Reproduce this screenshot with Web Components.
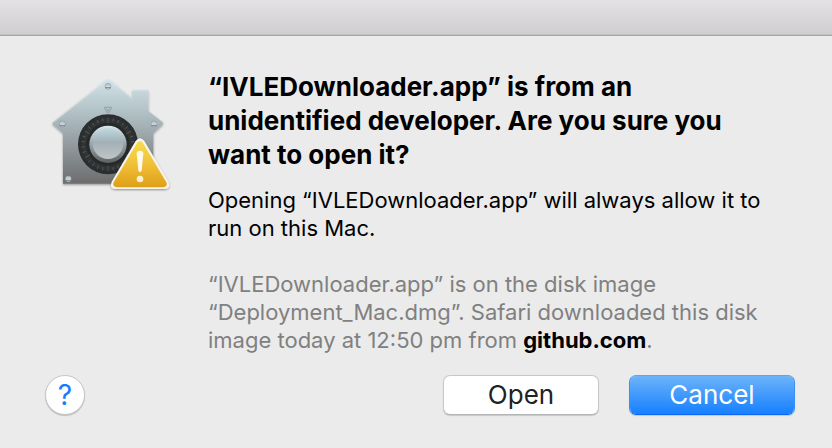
<!DOCTYPE html>
<html lang="en">
<head>
<meta charset="utf-8">
<title>Open application</title>
<style>
body { margin: 0; background: #ebebeb; font-family: Inter, "Liberation Sans", sans-serif; color: #000; }
</style>
</head>
<body>
<alert-dialog>
  <gatekeeper-icon slot="icon"></gatekeeper-icon>
  <alert-message slot="message">
    <span slot="title">“IVLEDownloader.app” is from an unidentified developer. Are you sure you want to open it?</span>
    <span slot="body">Opening “IVLEDownloader.app” will always allow it to run on this Mac.</span>
    <span slot="info">“IVLEDownloader.app” is on the disk image “Deployment_Mac.dmg”. Safari downloaded this disk image today at 12:50 pm from <b style="color:#000">github.com</b>.</span>
  </alert-message>
  <help-button slot="help"></help-button>
  <push-button slot="actions">Open</push-button>
  <push-button slot="actions" primary>Cancel</push-button>
</alert-dialog>
<script>
const define = (name, html) => {
  const template = document.createElement('template');
  template.innerHTML = html;
  customElements.define(name, class extends HTMLElement {
    constructor() {
      super();
      this.attachShadow({ mode: 'open' }).append(template.content.cloneNode(true));
    }
  });
};

define('alert-dialog', `
<style>
:host { display: flex; flex-direction: column; min-height: 100vh; box-sizing: border-box; background: #ebebeb; }
header { height: 35px; background: linear-gradient(#e4e2e5, #cfcdd0); border-bottom: 1px solid #a6a4a7; box-shadow: inset 0 -1px #c3c1c4; }
main { display: grid; grid-template-columns: auto 1fr; column-gap: 28px; padding: 34px 60px 0 40px; }
footer { display: flex; align-items: center; justify-content: space-between; padding: 21px 37px 33px 45px; }
.actions { display: flex; gap: 30px; }
</style>
<header></header>
<main><slot name="icon"></slot><slot name="message"></slot></main>
<footer><slot name="help"></slot><div class="actions"><slot name="actions"></slot></div></footer>`);

define('alert-message', `
<style>
:host { display: block; }
h1, p { margin: 0; }
h1 { font-size: 26px; line-height: 34px; font-weight: 700; }
p { font-size: 22px; line-height: 28px; }
.body { margin-top: 14px; }
.info { margin-top: 28px; color: #808080; }
</style>
<h1><slot name="title"></slot></h1>
<p class="body"><slot name="body"></slot></p>
<p class="info"><slot name="info"></slot></p>`);

define('help-button', `
<style>
:host { display: block; }
button { display: grid; place-items: center; width: 40px; height: 40px; padding: 0; border: 1px solid #c6c6c6; border-radius: 50%; background: #fff; box-shadow: 0 1px 1px #00000030; color: #147efb; font: 400 28px/36px Inter, sans-serif; }
</style>
<button type="button" aria-label="Help">?</button>`);

define('push-button', `
<style>
:host { display: block; }
button { height: 40px; min-width: 156px; padding: 0 24px; border: 1px solid #c8c8c8; border-bottom-color: #b4b4b4; border-radius: 7px; background: #fff; box-shadow: 0 1px 1px #00000026; color: #222; font: 400 26px/36px Inter, sans-serif; }
:host([primary]) button { min-width: 166px; border-color: #5aa5f0 #3a8ff5 #0f67f5; background: linear-gradient(#6db3f9, #1680ff) padding-box; color: #fff; }
</style>
<button type="button"><slot></slot></button>`);

const screw = (x, y) => `<circle cx="${x}" cy="${y}" r="9.5" fill="#84949a"/><circle cx="${x}" cy="${y - 1}" r="8" fill="url(#screw)"/><path d="M${x - 8} ${y + 4}h16" stroke="#5f6c71" stroke-width="2.5"/>`;
const ticks = Array.from({ length: 30 }, (_, i) => `<path d="M204 143v${i % 5 ? 10 : 17}" transform="rotate(${i * 12} 204 223)"/>`).join('');
define('gatekeeper-icon', `
<style>
:host { display: block; }
svg { display: block; width: 140px; height: 130px; }
</style>
<svg viewBox="0 0 420 390" role="img" aria-label="Security warning">
  <defs>
    <linearGradient id="house" x2="0" y2="1"><stop stop-color="#d0e3e8"/><stop offset=".4" stop-color="#a9b7bc"/><stop offset=".75" stop-color="#858b8e"/><stop offset="1" stop-color="#6c6c6d"/></linearGradient>
    <linearGradient id="knob" x2="0" y2="1"><stop stop-color="#c0d8e0"/><stop offset=".45" stop-color="#a2b0b6"/><stop offset="1" stop-color="#c0c4c6"/></linearGradient>
    <linearGradient id="rim" x2="0" y2="1"><stop stop-color="#d8e8ed"/><stop offset=".5" stop-color="#98a3a8"/><stop offset="1" stop-color="#5c6163"/></linearGradient>
    <linearGradient id="sign" x2="0" y2="1"><stop stop-color="#f7dd50"/><stop offset=".55" stop-color="#efbd35"/><stop offset="1" stop-color="#dd9f18"/></linearGradient>
    <linearGradient id="screw" x2="0" y2="1"><stop stop-color="#a3b2b8"/><stop offset="1" stop-color="#f2f7f8"/></linearGradient>
    <filter id="shadow" x="-10%" y="-10%" width="120%" height="125%"><feDropShadow dx="0" dy="3" stdDeviation="3" flood-opacity=".4"/></filter>
  </defs>
  <path d="M197 32Q204 26 211 32L278 86V63Q278 60 281 60H322Q325 60 325 63V123L368 157Q371 160 368 163L340 190V341H69V190L39 163Q36 160 39 157Z" fill="url(#house)" filter="url(#shadow)"/>
  <path d="M280 61H323M40 158L198 33Q204 28 210 33L278 88" fill="none" stroke="#e0edf0" stroke-width="2" opacity=".6"/>
  <path d="M193 112H215L208 127H200ZM199 115L204 124L209 115" fill="none" stroke="#82949a" stroke-width="2"/>
  <circle cx="204" cy="223" r="90" fill="#2b2e2f"/>
  <circle cx="204" cy="223" r="79" fill="#313435"/>
  <circle cx="204" cy="223" r="65" fill="#25292a"/>
  <g stroke="#606566" stroke-width="2">${ticks}</g>
  <circle cx="204" cy="223" r="56" fill="url(#rim)"/>
  <circle cx="204" cy="221" r="46" fill="url(#knob)"/>
  ${screw(204, 49)}${screw(67, 162)}${screw(342, 162)}${screw(85, 327)}
  <path d="M287 213Q300 196 313 213L384 334Q394 354 374 357H226Q206 354 216 334Z" fill="#f8f5ed" filter="url(#shadow)"/>
  <path d="M291 219Q300 207 309 219L379 337Q384 349 371 352H229Q216 349 221 337Z" fill="url(#sign)"/>
  <path d="M290 250Q291 242 300 242Q309 242 310 250L305 301Q304 306 300 306Q296 306 295 301Z" fill="#fff9e8"/>
  <circle cx="300" cy="327" r="10" fill="#fff0ce"/>
</svg>`);
</script>
</body>
</html>
